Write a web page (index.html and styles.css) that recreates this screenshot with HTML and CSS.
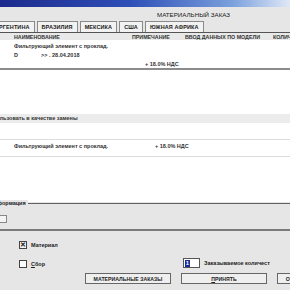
FILE: index.html
```html
<!DOCTYPE html>
<html lang="ru">
<head>
    <meta charset="UTF-8">
    <title>Материальный заказ</title>
    <link rel="stylesheet" href="styles.css">
</head>
<body>

    <!-- Window title -->
    <div class="titlebar"></div>
    <div class="caption">МАТЕРИАЛЬНЫЙ ЗАКАЗ</div>

    <!-- Country tabs -->
    <div class="tabs">
        <div class="tab first">АРГЕНТИНА</div>
        <div class="tab">БРАЗИЛИЯ</div>
        <div class="tab">МЕКСИКА</div>
        <div class="tab">США</div>
        <div class="tab">ЮЖНАЯ АФРИКА</div>
    </div>

    <!-- Order list -->
    <div class="grid-head">
        <span class="col-name">НАИМЕНОВАНИЕ</span>
        <span class="col-note">ПРИМЕЧАНИЕ</span>
        <span class="col-model">ВВОД ДАННЫХ ПО МОДЕЛИ</span>
        <span class="col-qty">КОЛИЧЕСТВО</span>
    </div>
    <div class="list">
        <div class="row">Фильтрующий элемент с проклад.</div>
        <div class="row"><span class="code">D</span>&gt;&gt; . 28.04.2018</div>
        <div class="row vat">+ 18.0% НДС</div>
    </div>
    <div class="blank"></div>

    <!-- Replacement -->
    <div class="section-bar">Использовать в качестве замены</div>
    <div class="list2">
        <div class="row2">
            <span class="col-name">Фильтрующий элемент с проклад.</span>
            <span class="vat2">+ 18.0% НДС</span>
        </div>
    </div>

    <!-- Info group -->
    <div class="group">
        <div class="group-label">Информация</div>
        <div class="mini-btn"></div>
    </div>

    <!-- Options -->
    <div class="options">
        <label class="check"><span class="box checked">✕</span><span>Материал</span></label>
        <div class="qty-line">
            <label class="check"><span class="box"></span><span><u>С</u>бор</span></label>
            <span class="qty"><span class="qty-input"><span class="caret">1</span></span><span>Заказываемое количест</span></span>
        </div>
        <div class="buttons">
            <button class="btn btn-orders">МАТЕРИАЛЬНЫЕ ЗАКАЗЫ</button>
            <button class="btn btn-ok"><span><u>П</u>РИНЯТЬ</span></button>
            <button class="btn btn-cut">ОТМЕНА</button>
        </div>
    </div>

</body>
</html>
```

FILE: styles.css
```css
* {
    margin: 0;
    padding: 0;
    box-sizing: border-box;
}
body {
    width: 290px;
    height: 290px;
    overflow: hidden;
    background: #e6e6e6;
    font-family: "Liberation Sans", Arial, sans-serif;
    font-size: 5.5px;
    color: #202020;
}

.titlebar {
    height: 7px;
    background: linear-gradient(to right, #1c2a8c 0%, #2f4fb8 45%, #7aa0dc 80%, #dfe8f6 100%);
}
.caption {
    height: 14px;
    padding: 4px 0 0 157px;
    font-size: 6.2px;
}

/* Tabs */
.tabs {
    height: 11px;
    display: flex;
    gap: 2px;
    margin-left: -10px;
}
.tab {
    height: 11px;
    padding: 2px 4px 0;
    border: 1px solid #8a8a8a;
    border-bottom: none;
    background: #f2f2f2;
    font-weight: bold;
    font-size: 5.5px;
    letter-spacing: 0.1px;
}

/* Header */
.grid-head {
    height: 8px;
    display: flex;
    border-top: 1px solid #555;
    background: #e9e9e9;
    font-weight: bold;
    font-size: 5.3px;
    color: #333;
    padding-top: 1px;
    white-space: nowrap;
}
.col-name {
    width: 132px;
    flex-shrink: 0;
    padding-left: 14px;
}
.col-note {
    width: 53px;
    flex-shrink: 0;
}
.col-model {
    width: 88px;
    flex-shrink: 0;
}

.list {
    height: 30px;
    background: #fff;
    border-bottom: 2px solid #8c8c8c;
    padding: 3px 0 0 14px;
    font-size: 5.5px;
    font-weight: bold;
    color: #333;
}
.row {
    height: 9px;
}
.code {
    display: inline-block;
    width: 27px;
}
.vat {
    padding-left: 131px;
}

.blank {
    height: 44px;
    background: #fff;
}

.section-bar {
    height: 9px;
    padding-top: 1px;
    margin-left: -14px;
    background: #ececec;
    font-weight: bold;
    font-size: 5.5px;
    color: #333;
}

.list2 {
    height: 79px;
    background: #fff;
    padding-top: 16px;
}
.row2 {
    height: 18px;
    display: flex;
    border-top: 1px solid #dcdcdc;
    border-bottom: 1px solid #dcdcdc;
    padding-top: 3px;
    font-weight: bold;
    font-size: 5.5px;
    color: #333;
}
.row2 .col-name {
    width: 155px;
}

/* Group box */
.group {
    position: relative;
    height: 28px;
    margin-top: 1px;
    border-top: 1px solid #606060;
    border-bottom: 2px solid #7a7a7a;
}
.group-label {
    position: absolute;
    top: -4px;
    left: -12px;
    padding: 0 2px;
    background: #e6e6e6;
    font-weight: bold;
    font-size: 5.5px;
}
.mini-btn {
    position: absolute;
    top: 11px;
    left: -2px;
    width: 9px;
    height: 8px;
    border: 1px solid #888;
    background: #f4f4f4;
}

/* Options */
.options {
    padding: 9px 0 0 19px;
}
.check {
    display: flex;
    align-items: center;
    gap: 4px;
    height: 9px;
    font-weight: bold;
    font-size: 5.5px;
}
.box {
    width: 8px;
    height: 8px;
    border: 1px solid #444;
    background: #fff;
    font-size: 7px;
    line-height: 6px;
    text-align: center;
    color: #222;
}
.box.checked {
    background: #f0f0f0;
}
.qty-line {
    display: flex;
    justify-content: space-between;
    align-items: flex-end;
    margin-top: 7px;
    height: 12px;
}
.qty {
    display: flex;
    align-items: center;
    gap: 4px;
    width: 107px;
    font-weight: bold;
    font-size: 5.5px;
    white-space: nowrap;
    overflow: hidden;
}
.qty-input {
    width: 17px;
    height: 10px;
    flex-shrink: 0;
    border: 1px solid #555;
    background: #fff;
    padding: 1px;
}
.caret {
    display: block;
    width: 5px;
    height: 7px;
    background: #1a2a9a;
    color: #fff;
    font-size: 6px;
    line-height: 7px;
    text-align: center;
}

.buttons {
    display: flex;
    gap: 10px;
    margin: 5px 0 0 66px;
}
.btn {
    height: 11px;
    flex-shrink: 0;
    border: 1px solid #666;
    background: #efefef;
    font-family: "Liberation Sans", Arial, sans-serif;
    font-weight: bold;
    font-size: 5.2px;
    color: #222;
    white-space: nowrap;
    overflow: hidden;
}
.btn-orders {
    width: 86px;
}
.btn-ok {
    width: 86px;
}
.btn-cut {
    width: 40px;
}
```
